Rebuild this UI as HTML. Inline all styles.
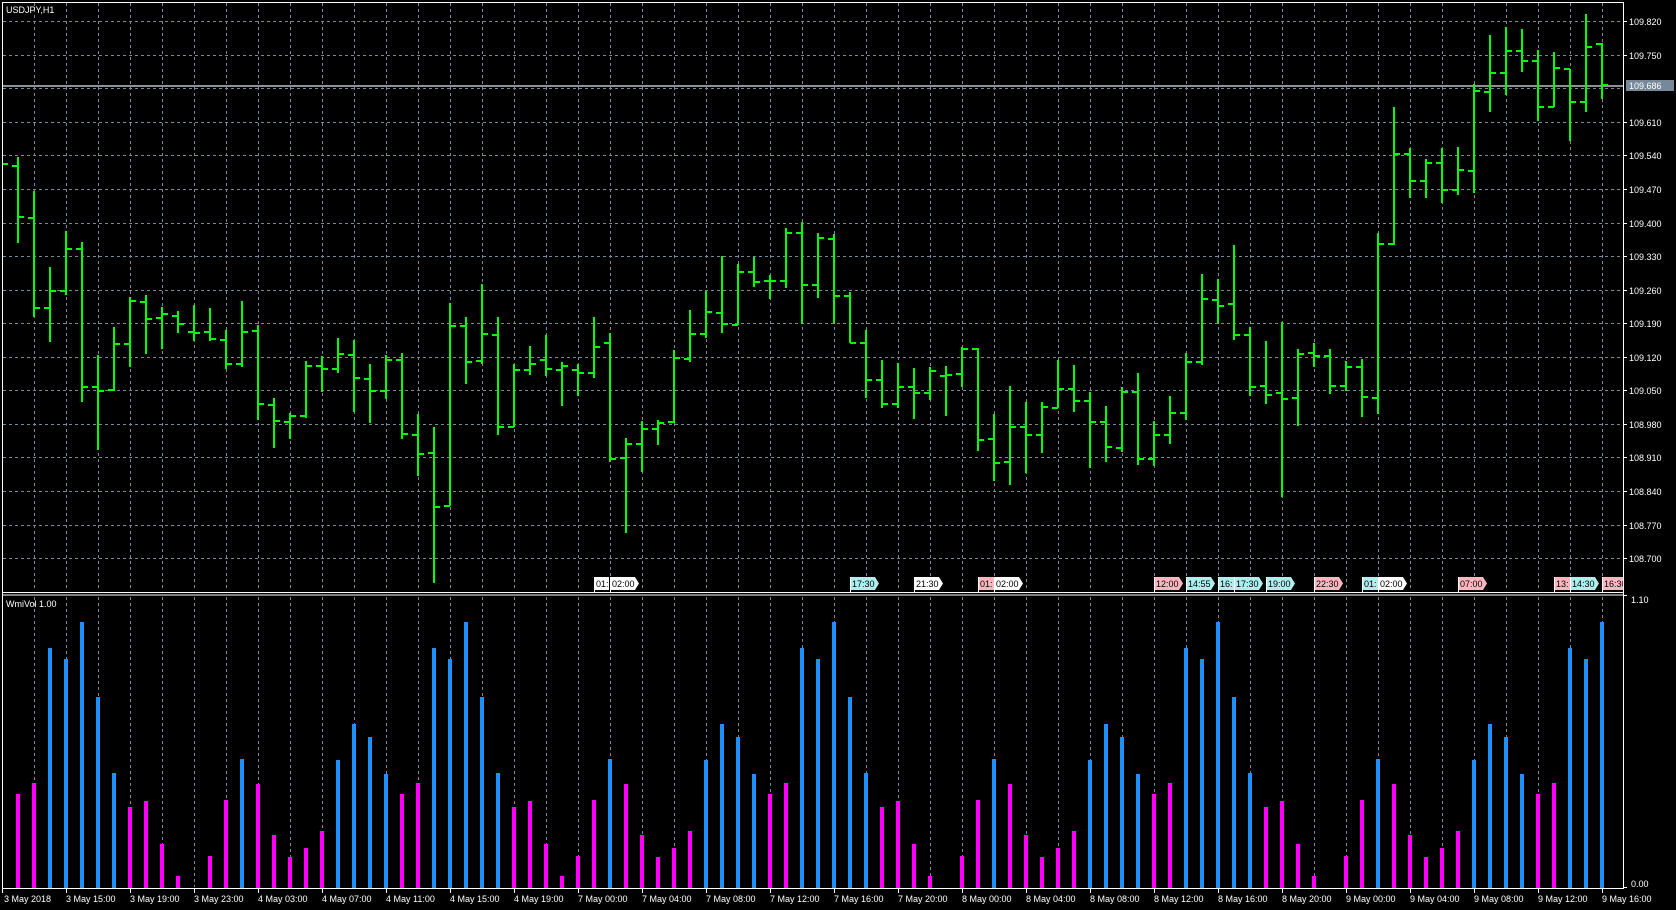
<!DOCTYPE html>
<html><head><meta charset="utf-8"><style>
html,body{margin:0;padding:0;background:#000;width:1676px;height:910px;overflow:hidden}
svg{display:block}
text{font-family:"Liberation Sans",sans-serif;font-size:9px;fill:#fff}
.mk text{fill:#000}
</style></head><body>
<svg width="1676" height="910" viewBox="0 0 1676 910" xmlns="http://www.w3.org/2000/svg">
<rect width="1676" height="910" fill="#000"/>
<!-- grids -->
<path stroke="#778899" stroke-width="1" stroke-dasharray="3,3" fill="none" d="M3 21.5H1622M3 55.5H1622M3 88.5H1622M3 122.5H1622M3 155.5H1622M3 189.5H1622M3 223.5H1622M3 256.5H1622M3 290.5H1622M3 323.5H1622M3 357.5H1622M3 390.5H1622M3 424.5H1622M3 457.5H1622M3 491.5H1622M3 525.5H1622M3 558.5H1622"/>
<path stroke="#778899" stroke-width="1" stroke-dasharray="3,3" fill="none" d="M34.5 3V591M66.5 3V591M98.5 3V591M130.5 3V591M162.5 3V591M194.5 3V591M226.5 3V591M258.5 3V591M290.5 3V591M322.5 3V591M354.5 3V591M386.5 3V591M418.5 3V591M450.5 3V591M482.5 3V591M514.5 3V591M546.5 3V591M578.5 3V591M610.5 3V591M642.5 3V591M674.5 3V591M706.5 3V591M738.5 3V591M770.5 3V591M802.5 3V591M834.5 3V591M866.5 3V591M898.5 3V591M930.5 3V591M962.5 3V591M994.5 3V591M1026.5 3V591M1058.5 3V591M1090.5 3V591M1122.5 3V591M1154.5 3V591M1186.5 3V591M1218.5 3V591M1250.5 3V591M1282.5 3V591M1314.5 3V591M1346.5 3V591M1378.5 3V591M1410.5 3V591M1442.5 3V591M1474.5 3V591M1506.5 3V591M1538.5 3V591M1570.5 3V591M1602.5 3V591"/>
<path stroke="#778899" stroke-width="1" stroke-dasharray="3,3" fill="none" d="M34.5 597V887M66.5 597V887M98.5 597V887M130.5 597V887M162.5 597V887M194.5 597V887M226.5 597V887M258.5 597V887M290.5 597V887M322.5 597V887M354.5 597V887M386.5 597V887M418.5 597V887M450.5 597V887M482.5 597V887M514.5 597V887M546.5 597V887M578.5 597V887M610.5 597V887M642.5 597V887M674.5 597V887M706.5 597V887M738.5 597V887M770.5 597V887M802.5 597V887M834.5 597V887M866.5 597V887M898.5 597V887M930.5 597V887M962.5 597V887M994.5 597V887M1026.5 597V887M1058.5 597V887M1090.5 597V887M1122.5 597V887M1154.5 597V887M1186.5 597V887M1218.5 597V887M1250.5 597V887M1282.5 597V887M1314.5 597V887M1346.5 597V887M1378.5 597V887M1410.5 597V887M1442.5 597V887M1474.5 597V887M1506.5 597V887M1538.5 597V887M1570.5 597V887M1602.5 597V887"/>
<!-- current price line -->
<line x1="3" y1="86" x2="1623" y2="86" stroke="#c0c0c0" stroke-width="1.5"/>
<!-- price bars -->
<path stroke="#00ff00" stroke-width="2" fill="none" d="
M2 164H8
M18 157V243M12 166H18M18 217H24
M34 191V317M28 218H34M34 308H40
M50 267V342M44 308H50M50 291H56
M66 231V295M60 291H66M66 249H72
M82 242V402M76 249H82M82 387H88
M98 355V450M92 387H98M98 391H104
M114 327V391M108 390H114M114 344H120
M130 297V367M124 344H130M130 301H136
M146 295V354M140 302H146M146 319H152
M162 307V349M156 318H162M162 314H168
M178 311V333M172 316H178M178 324H184
M194 305V341M188 332H194M194 333H200
M210 308V341M204 332H210M210 339H216
M226 330V369M220 340H226M226 364H232
M242 301V367M236 364H242M242 332H248
M258 325V420M252 331H258M258 404H264
M274 398V448M268 405H274M274 421H280
M290 413V439M284 422H290M290 416H296
M306 361V418M300 416H306M306 366H312
M322 356V392M316 366H322M322 369H328
M338 338V373M332 369H338M338 354H344
M354 340V412M348 355H354M354 378H360
M370 364V423M364 379H370M370 391H376
M386 355V399M380 391H386M386 360H392
M402 353V439M396 360H402M402 434H408
M418 414V476M412 435H418M418 454H424
M434 427V583M428 453H434M434 507H440
M450 303V506M444 506H450M450 326H456
M466 317V384M460 326H466M466 362H472
M482 284V364M476 361H482M482 334H488
M498 317V435M492 335H498M498 427H504
M514 364V427M508 427H514M514 370H520
M530 346V375M524 370H530M530 364H536
M546 335V376M540 360H546M546 369H552
M562 362V406M556 370H562M562 366H568
M578 364V396M572 370H578M578 373H584
M594 317V378M588 373H594M594 347H600
M610 333V462M604 343H610M610 459H616
M626 438V533M620 458H626M626 444H632
M642 421V472M636 444H642M642 429H648
M658 420V445M652 429H658M658 423H664
M674 350V423M668 422H674M674 358H680
M690 310V362M684 359H690M690 334H696
M706 291V338M700 334H706M706 312H712
M722 256V333M716 313H722M722 324H728
M738 264V325M732 325H738M738 272H744
M754 257V287M748 272H754M754 282H760
M770 275V299M764 281H770M770 281H776
M786 228V288M780 281H786M786 233H792
M802 222V324M796 233H802M802 285H808
M818 233V298M812 285H818M818 238H824
M834 234V324M828 239H834M834 296H840
M850 292V343M844 296H850M850 343H856
M866 330V398M860 343H866M866 380H872
M882 360V408M876 380H882M882 404H888
M898 363V408M892 404H898M898 387H904
M914 368V419M908 387H914M914 393H920
M930 367V400M924 393H930M930 371H936
M946 366V416M940 376H946M946 375H952
M962 347V387M956 374H962M962 349H968
M978 348V451M972 349H978M978 440H984
M994 414V481M988 439H994M994 463H1000
M1010 386V485M1004 462H1010M1010 427H1016
M1026 402V473M1020 427H1026M1026 435H1032
M1042 402V453M1036 435H1042M1042 407H1048
M1058 360V408M1052 408H1058M1058 389H1064
M1074 365V412M1068 389H1074M1074 401H1080
M1090 392V468M1084 401H1090M1090 422H1096
M1106 406V462M1100 422H1106M1106 447H1112
M1122 387V452M1116 448H1122M1122 392H1128
M1138 373V465M1132 392H1138M1138 459H1144
M1154 421V466M1148 459H1154M1154 435H1160
M1170 396V444M1164 435H1170M1170 413H1176
M1186 353V420M1180 413H1186M1186 362H1192
M1202 274V365M1196 362H1202M1202 299H1208
M1218 279V324M1212 300H1218M1218 306H1224
M1234 245V340M1228 304H1234M1234 335H1240
M1250 327V396M1244 335H1250M1250 387H1256
M1266 341V404M1260 386H1266M1266 395H1272
M1282 322V497M1276 393H1282M1282 399H1288
M1298 349V426M1292 398H1298M1298 354H1304
M1314 343V367M1308 353H1314M1314 356H1320
M1330 349V394M1324 356H1330M1330 386H1336
M1346 361V391M1340 386H1346M1346 367H1352
M1362 359V417M1356 367H1362M1362 397H1368
M1378 233V414M1372 398H1378M1378 244H1384
M1394 107V245M1388 244H1394M1394 154H1400
M1410 148V198M1404 154H1410M1410 181H1416
M1426 159V198M1420 181H1426M1426 163H1432
M1442 148V203M1436 163H1442M1442 190H1448
M1458 147V195M1452 190H1458M1458 170H1464
M1474 84V193M1468 171H1474M1474 91H1480
M1490 35V112M1484 92H1490M1490 73H1496
M1506 27V95M1500 73H1506M1506 51H1512
M1522 29V72M1516 51H1522M1522 61H1528
M1538 50V121M1532 61H1538M1538 107H1544
M1554 52V107M1548 107H1554M1554 68H1560
M1570 69V141M1564 69H1570M1570 102H1576
M1586 14V112M1580 102H1586M1586 47H1592
M1602 43V99M1596 44H1602M1602 85H1608"/>
<!-- volume bars -->
<path stroke="#ff00ff" stroke-width="4" fill="none" d="M18 888V794M34 888V783M130 888V807M146 888V801M162 888V844M178 888V876M210 888V856M226 888V800M258 888V784M274 888V835M290 888V857M306 888V848M322 888V831M402 888V794M418 888V783M514 888V807M530 888V801M546 888V844M562 888V876M578 888V856M594 888V800M626 888V784M642 888V835M658 888V857M674 888V848M690 888V831M770 888V794M786 888V783M882 888V807M898 888V801M914 888V844M930 888V876M962 888V856M978 888V800M1010 888V784M1026 888V835M1042 888V857M1058 888V848M1074 888V831M1154 888V794M1170 888V783M1266 888V807M1282 888V801M1298 888V844M1314 888V876M1346 888V856M1362 888V800M1394 888V784M1410 888V835M1426 888V857M1442 888V848M1458 888V831M1538 888V794M1554 888V783"/>
<path stroke="#1e90ff" stroke-width="4" fill="none" d="M50 888V648M66 888V659M82 888V622M98 888V697M114 888V773M242 888V759M338 888V760M354 888V724M370 888V737M386 888V774M434 888V648M450 888V659M466 888V622M482 888V697M498 888V773M610 888V759M706 888V760M722 888V724M738 888V737M754 888V774M802 888V648M818 888V659M834 888V622M850 888V697M866 888V773M994 888V759M1090 888V760M1106 888V724M1122 888V737M1138 888V774M1186 888V648M1202 888V659M1218 888V622M1234 888V697M1250 888V773M1378 888V759M1474 888V760M1490 888V724M1506 888V737M1522 888V774M1570 888V648M1586 888V659M1602 888V622"/>
<!-- frame -->
<path stroke="#fff" stroke-width="1" fill="none" d="M2.5 2V889M2 2.5H1624M1623.5 2V889M2 592.5H1624M2 595H1624M2 888.5H1624"/>
<path stroke="#fff" stroke-width="1" d="M1623 21.5H1627M1623 55.5H1627M1623 122.5H1627M1623 155.5H1627M1623 189.5H1627M1623 223.5H1627M1623 256.5H1627M1623 290.5H1627M1623 323.5H1627M1623 357.5H1627M1623 390.5H1627M1623 424.5H1627M1623 457.5H1627M1623 491.5H1627M1623 525.5H1627M1623 558.5H1627M1623 595.5H1627M1623 887.5H1627
M2.5 888V893M66.5 888V893M130.5 888V893M194.5 888V893M258.5 888V893M322.5 888V893M386.5 888V893M450.5 888V893M514.5 888V893M578.5 888V893M642.5 888V893M706.5 888V893M770.5 888V893M834.5 888V893M898.5 888V893M962.5 888V893M1026.5 888V893M1090.5 888V893M1154.5 888V893M1218.5 888V893M1282.5 888V893M1346.5 888V893M1410.5 888V893M1474.5 888V893M1538.5 888V893M1602.5 888V893"/>
<!-- axis labels -->
<g>
<text x="1629" y="25">109.820</text>
<text x="1629" y="59">109.750</text>
<text x="1629" y="126">109.610</text>
<text x="1629" y="159">109.540</text>
<text x="1629" y="193">109.470</text>
<text x="1629" y="227">109.400</text>
<text x="1629" y="260">109.330</text>
<text x="1629" y="294">109.260</text>
<text x="1629" y="327">109.190</text>
<text x="1629" y="361">109.120</text>
<text x="1629" y="394">109.050</text>
<text x="1629" y="428">108.980</text>
<text x="1629" y="461">108.910</text>
<text x="1629" y="495">108.840</text>
<text x="1629" y="529">108.770</text>
<text x="1629" y="562">108.700</text>
<rect x="1626" y="80" width="48" height="11" fill="#778899"/>
<text x="1629" y="89">109.686</text>
<text x="1631" y="603">1.10</text>
<text x="1631" y="887">0.00</text>
<text x="6" y="13">USDJPY,H1</text>
<text x="6" y="607">WmiVol 1.00</text>
</g>
<!-- time axis -->
<g>
<text x="4" y="902">3 May 2018</text>
<text x="66" y="902">3 May 15:00</text>
<text x="130" y="902">3 May 19:00</text>
<text x="194" y="902">3 May 23:00</text>
<text x="258" y="902">4 May 03:00</text>
<text x="322" y="902">4 May 07:00</text>
<text x="386" y="902">4 May 11:00</text>
<text x="450" y="902">4 May 15:00</text>
<text x="514" y="902">4 May 19:00</text>
<text x="578" y="902">7 May 00:00</text>
<text x="642" y="902">7 May 04:00</text>
<text x="706" y="902">7 May 08:00</text>
<text x="770" y="902">7 May 12:00</text>
<text x="834" y="902">7 May 16:00</text>
<text x="898" y="902">7 May 20:00</text>
<text x="962" y="902">8 May 00:00</text>
<text x="1026" y="902">8 May 04:00</text>
<text x="1090" y="902">8 May 08:00</text>
<text x="1154" y="902">8 May 12:00</text>
<text x="1218" y="902">8 May 16:00</text>
<text x="1282" y="902">8 May 20:00</text>
<text x="1346" y="902">9 May 00:00</text>
<text x="1410" y="902">9 May 04:00</text>
<text x="1474" y="902">9 May 08:00</text>
<text x="1538" y="902">9 May 12:00</text>
<text x="1602" y="902">9 May 16:00</text>
</g>
<!-- event markers -->
<g class="mk" stroke="none">
<path d="M594 577H609V590H594Z" fill="#fff"/><text x="596" y="587">01:</text>
<path d="M610 577H635L639 583.5L635 590H610Z" fill="#fff"/><text x="612" y="587">02:00</text>
<path d="M850 577H875L879 583.5L875 590H850Z" fill="#afeeee"/><text x="852" y="587">17:30</text>
<path d="M914 577H939L943 583.5L939 590H914Z" fill="#fff"/><text x="916" y="587">21:30</text>
<path d="M978 577H994V590H978Z" fill="#ffb6c1"/><text x="980" y="587">01:</text>
<path d="M994 577H1019L1023 583.5L1019 590H994Z" fill="#fff"/><text x="996" y="587">02:00</text>
<path d="M1154 577H1179L1183 583.5L1179 590H1154Z" fill="#ffb6c1"/><text x="1156" y="587">12:00</text>
<path d="M1186 577H1211L1215 583.5L1211 590H1186Z" fill="#afeeee"/><text x="1188" y="587">14:55</text>
<path d="M1218 577H1234V590H1218Z" fill="#afeeee"/><text x="1220" y="587">16:</text>
<path d="M1234 577H1259L1263 583.5L1259 590H1234Z" fill="#afeeee"/><text x="1236" y="587">17:30</text>
<path d="M1266 577H1291L1295 583.5L1291 590H1266Z" fill="#afeeee"/><text x="1268" y="587">19:00</text>
<path d="M1314 577H1339L1343 583.5L1339 590H1314Z" fill="#ffb6c1"/><text x="1316" y="587">22:30</text>
<path d="M1362 577H1378V590H1362Z" fill="#afeeee"/><text x="1364" y="587">01:</text>
<path d="M1378 577H1403L1407 583.5L1403 590H1378Z" fill="#fff"/><text x="1380" y="587">02:00</text>
<path d="M1458 577H1483L1487 583.5L1483 590H1458Z" fill="#ffb6c1"/><text x="1460" y="587">07:00</text>
<path d="M1554 577H1570V590H1554Z" fill="#ffb6c1"/><text x="1556" y="587">13:</text>
<path d="M1570 577H1595L1599 583.5L1595 590H1570Z" fill="#afeeee"/><text x="1572" y="587">14:30</text>
<path d="M1602 577H1623V590H1602Z" fill="#ffb6c1"/>
<svg x="1602" y="577" width="21" height="13"><text x="2" y="10" style="fill:#000">16:30</text></svg>
</g>
<path stroke="#fff" stroke-width="1" d="M594.5 577V592M610.5 577V592M850.5 577V592M914.5 577V592M978.5 577V592M994.5 577V592M1154.5 577V592M1186.5 577V592M1218.5 577V592M1234.5 577V592M1266.5 577V592M1314.5 577V592M1362.5 577V592M1378.5 577V592M1458.5 577V592M1554.5 577V592M1570.5 577V592M1602.5 577V592"/>
</svg>
</body></html>
